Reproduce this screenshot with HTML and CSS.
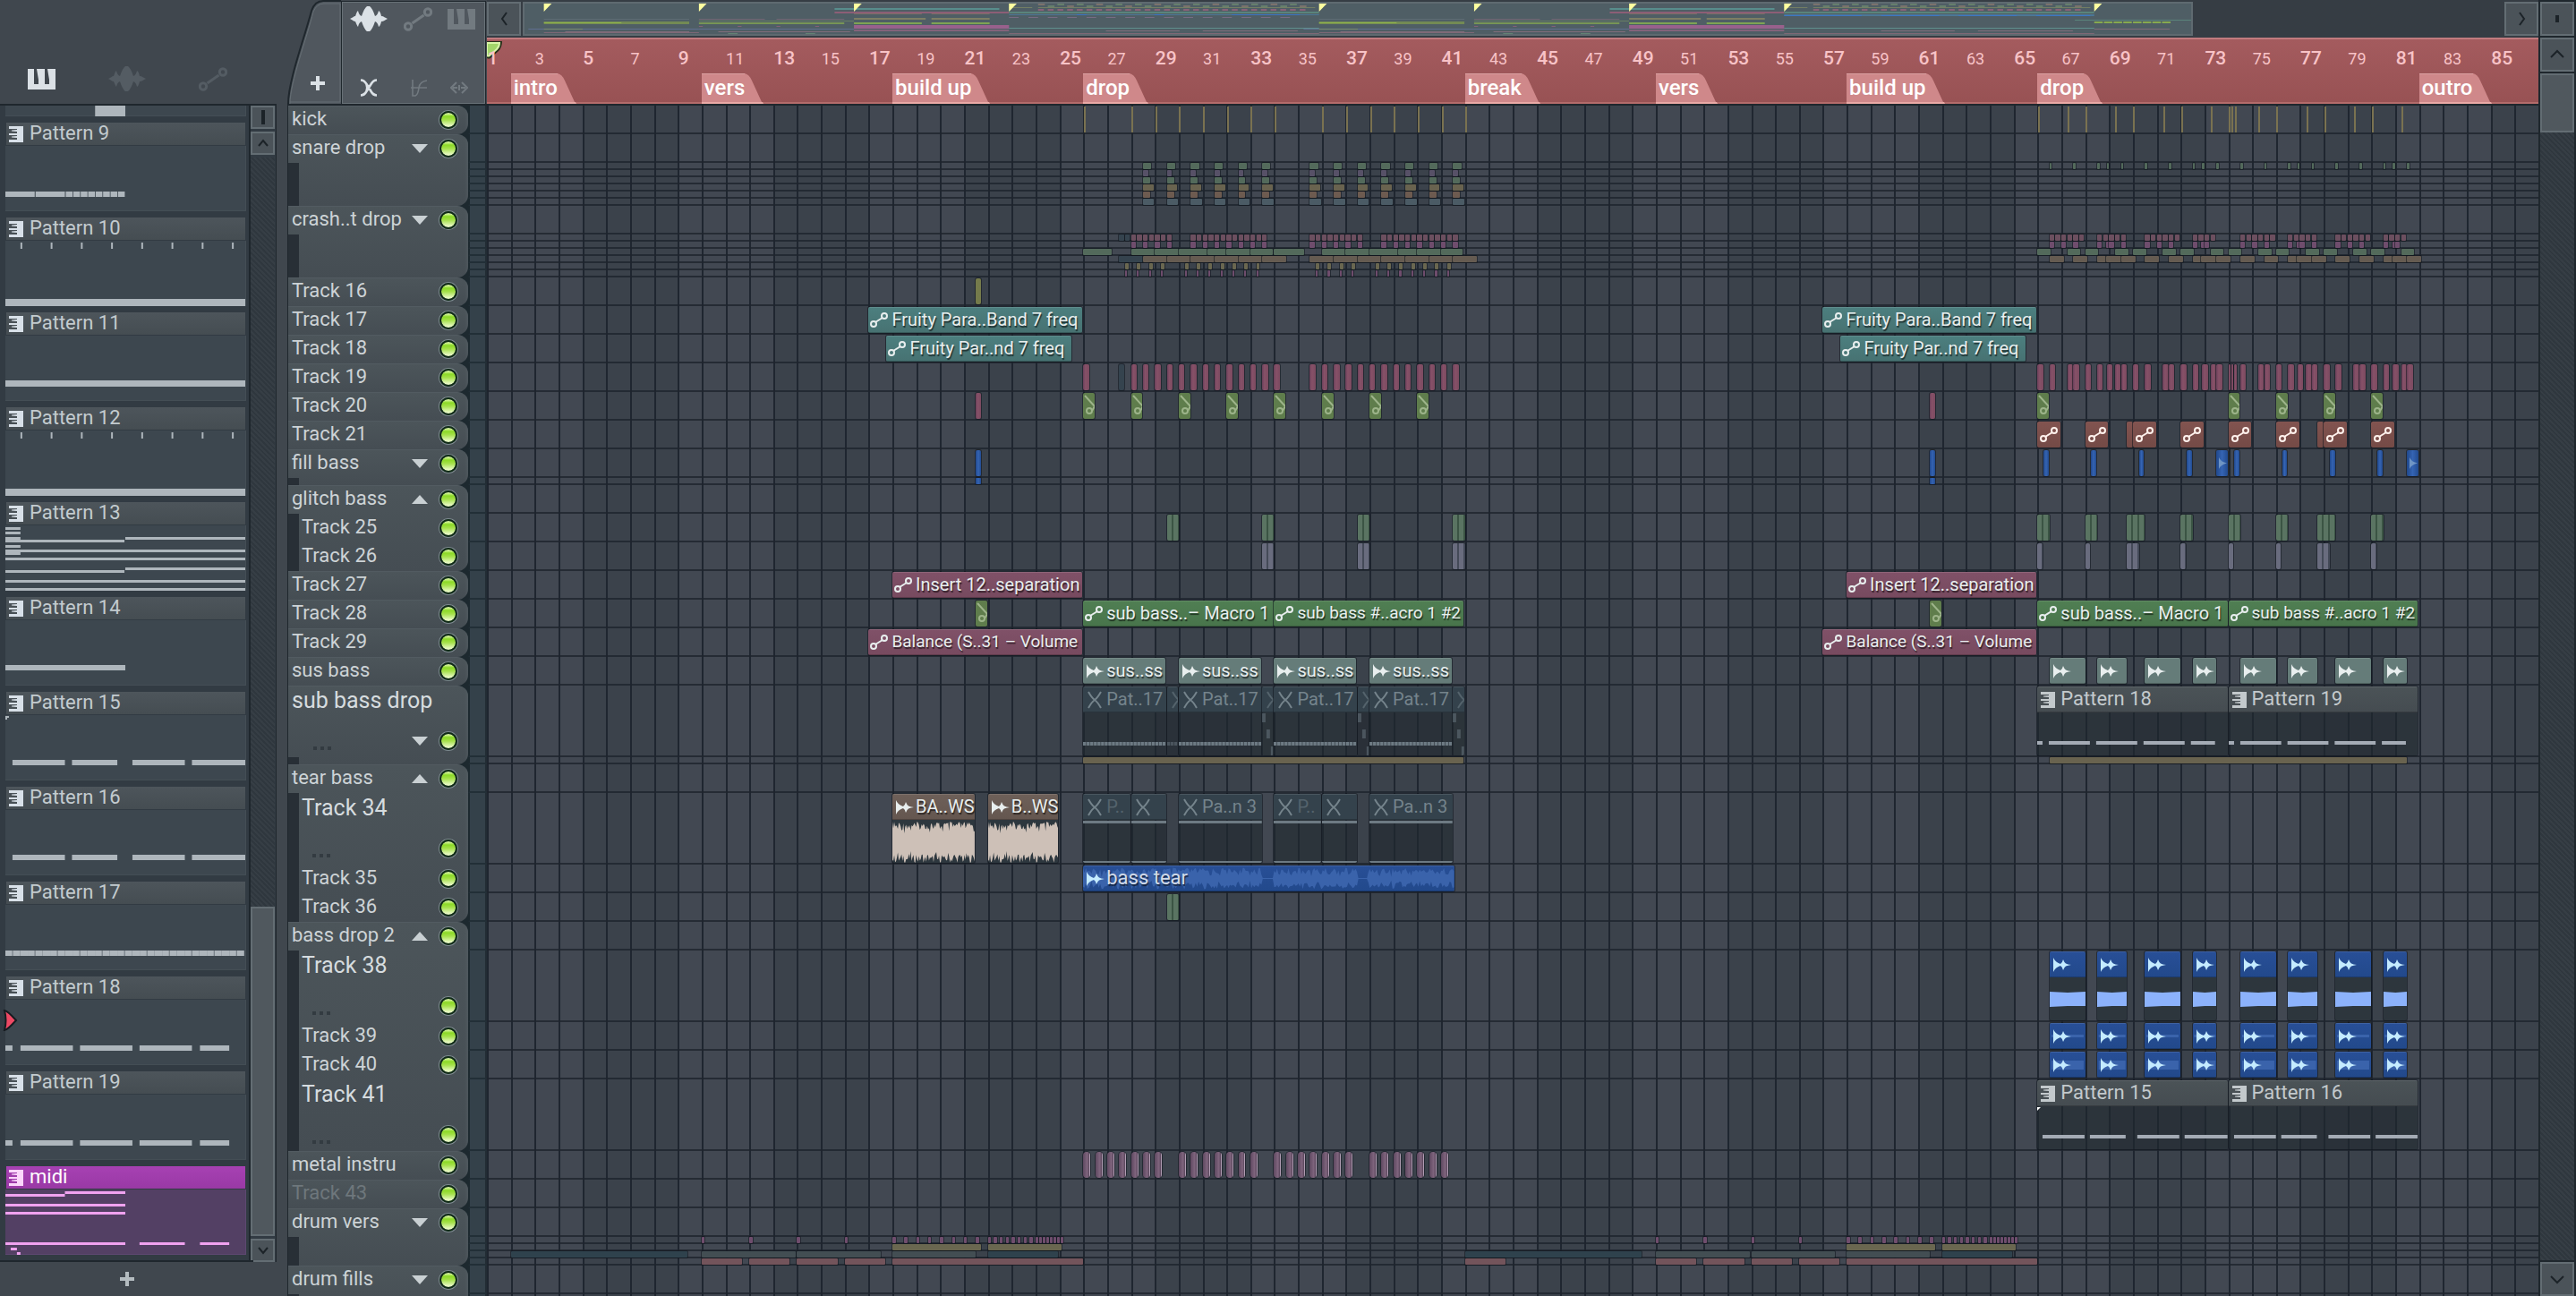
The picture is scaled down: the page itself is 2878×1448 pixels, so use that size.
FILE: index.html
```html
<!DOCTYPE html>
<html lang="en">
<head>
<meta charset="utf-8">
<title>Playlist</title>
<link rel="stylesheet" href="styles.css">
</head>
<body>
<svg class="defs" aria-hidden="true">
  <symbol id="i-piano" viewBox="0 0 31 23"><path fill-rule="evenodd" d="M0 0H31V23H0ZM7 0V17H12V12L10 0ZM19 0V17H24V12L22 0Z"/></symbol>
  <symbol id="i-wave" viewBox="0 0 42 28"><path d="M0 14C3 13 4 11 6 11Q8 5 9 5Q10 10 13 11Q16 2 19 0H22Q25 2 28 11Q31 10 32 5Q34 6 35 11C38 11 39 13 42 14C39 15 38 17 35 17Q34 22 32 23Q31 18 28 17Q25 26 22 28H19Q16 26 13 17Q10 18 9 23Q8 22 6 17C4 17 3 15 0 14Z"/></symbol>
  <symbol id="i-link" viewBox="0 0 32 27"><g fill="none" stroke="currentColor" stroke-width="3"><circle cx="5" cy="21.500" r="3.700"/><circle cx="27" cy="5.500" r="3.700"/><path d="M9.500 18L22.500 9"/></g></symbol>
  <symbol id="i-node" viewBox="0 0 20 17"><g fill="none" stroke="currentColor" stroke-width="2"><circle cx="4" cy="13" r="3"/><circle cx="16" cy="4" r="3"/><path d="M6 11L14 6"/></g></symbol>
  <symbol id="i-cross" viewBox="0 0 20 20"><path fill="none" stroke="currentColor" stroke-width="2.600" d="M1 1.500Q5 1.500 7.500 6Q9 10 7.500 14Q5 18.500 1 18.500M19 1.500Q15 1.500 12.500 6L7.500 14M19 18.500Q15 18.500 12.500 14L7.500 6"/></symbol>
  <symbol id="i-slope" viewBox="0 0 20 20"><path fill="none" stroke="currentColor" stroke-width="1.600" d="M1 10H19M3 1V19H6Q9 18 10 10Q11 3 19 2"/></symbol>
  <symbol id="i-stretch" viewBox="0 0 20 14"><path fill="none" stroke="currentColor" stroke-width="2" d="M7 1L1 7L7 13M13 1L19 7L13 13M3 7H8M12 7H17M10 4V10"/></symbol>
  <symbol id="i-keys" viewBox="0 0 16 18"><path d="M0 0H16V18H0V15H9V13L3 12.500V11.500L9 11V10H0V8H9V6L3 5.500V4.500L9 4V3H0Z"/></symbol>
  <symbol id="i-audio" viewBox="0 0 20 16"><path d="M0 0Q2 5 8 7Q10 6 11 2Q12.500 6 14 6.500Q16 7.500 20 8Q16 8.500 14 9.500Q12.500 10 11 14Q10 10 8 9Q2 11 0 16Z"/></symbol>
  <symbol id="i-mute" viewBox="0 0 18 20"><path fill="none" stroke="currentColor" stroke-width="2" d="M2 1Q6 8 9 10Q12 8 16 1M2 19Q6 12 9 10Q12 12 16 19"/></symbol>
</svg>

<div class="app">
  <aside class="browser" aria-label="Picker">
    <nav class="browser-tabs">
      <button class="icon-btn on" aria-label="Patterns"><svg width="31" height="23"><use href="#i-piano"/></svg></button>
      <button class="icon-btn faint" aria-label="Audio clips"><svg width="42" height="28"><use href="#i-wave"/></svg></button>
      <button class="icon-btn faint" aria-label="Automation clips"><svg width="32" height="27"><use href="#i-link"/></svg></button>
    </nav>
    <div class="browser-body">
      <div class="patterns" id="patterns"></div>
      <div class="scroll scroll-left">
        <button class="sbtn" aria-label="Scroll options"><svg width="20" height="20"><path d="M10 2V18" stroke-width="4"/></svg></button>
        <button class="sbtn" aria-label="Scroll up"><svg width="20" height="20"><path d="M5 13L10 7L15 13"/></svg></button>
        <div class="strack"><div class="sthumb thumb-left"></div></div>
        <button class="sbtn" aria-label="Scroll down"><svg width="20" height="20"><path d="M5 7L10 13L15 7"/></svg></button>
      </div>
    </div>
    <div class="browser-foot"><button class="icon-btn soft" aria-label="Add pattern"><svg width="18" height="18"><path d="M7 1H11V7H17V11H11V17H7V11H1V7H7Z"/></svg></button></div>
  </aside>

  <main class="playlist">
    <section class="pl-main">
      <header class="pl-head">
        <div class="corner">
          <div class="add-tab">
            <svg class="tab-shape" viewBox="0 0 60 116" aria-hidden="true"><path class="tab-fill" d="M1 116C1 90 20 40 28 12Q32 2 40 2H60V116Z"/><path class="tab-dark" d="M1 116C1 90 20 40 27 12Q31 1 40 1H60"/><path class="tab-light" d="M3 116C3 92 22 42 29 13Q33 4 41 4H59V114H3"/></svg>
            <button class="icon-btn on" aria-label="Add track"><svg width="18" height="18"><path d="M7 1H11V7H17V11H11V17H7V11H1V7H7Z"/></svg></button>
          </div>
          <div class="tools">
            <div class="tool-row">
              <button class="icon-btn on" aria-label="Audio"><svg width="42" height="28"><use href="#i-wave"/></svg></button>
              <button class="icon-btn dim" aria-label="Automation"><svg width="32" height="27"><use href="#i-link"/></svg></button>
              <button class="icon-btn dim" aria-label="Piano roll"><svg width="31" height="23"><use href="#i-piano"/></svg></button>
            </div>
            <div class="tool-row">
              <button class="icon-btn on wide" aria-label="Crossfade"><svg width="20" height="20"><use href="#i-cross"/></svg></button>
              <button class="icon-btn dim" aria-label="Slope"><svg width="20" height="20"><use href="#i-slope"/></svg></button>
              <button class="icon-btn dim" aria-label="Stretch"><svg width="20" height="14"><use href="#i-stretch"/></svg></button>
            </div>
          </div>
        </div>
        <div class="time">
          <div class="overview">
            <button class="sbtn" aria-label="Scroll left"><svg width="20" height="20"><path d="M13 3L8 10L13 17"/></svg></button>
            <div class="minimap"><svg id="minimap" viewBox="0 0 86 34" preserveAspectRatio="none"></svg></div>
            <button class="sbtn" aria-label="Scroll right"><svg width="20" height="20"><path d="M8 3L13 10L8 17"/></svg></button>
          </div>
          <div class="ruler" id="ruler">
            <svg class="playhead" width="18" height="22" aria-hidden="true"><path d="M0 1H17Q17 8 13 12L4 20Q2 21 0 20Z" class="ph-edge"/><path d="M0 3H14Q14 7 11 10L3 17Q1 18 0 17Z" class="ph-fill"/></svg>
          </div>
        </div>
      </header>
      <div class="tracks">
        <div class="heads" id="heads"></div>
        <div class="arrange">
          <div class="grid" id="grid"></div>
          <div class="lanes" id="lanes"></div>
        </div>
      </div>
    </section>
    <div class="scroll scroll-right">
      <button class="sbtn" aria-label="View options"><svg width="20" height="20"><path d="M10 6V14" stroke-width="4"/></svg></button>
      <button class="sbtn" aria-label="Scroll up"><svg width="20" height="20"><path d="M3 13L10 6L17 13"/></svg></button>
      <div class="strack"><div class="sthumb thumb-right"></div></div>
      <button class="sbtn" aria-label="Scroll down"><svg width="20" height="20"><path d="M3 7L10 14L17 7"/></svg></button>
    </div>
  </main>
</div>
<script src="playlist.js"></script>
</body>
</html>
```
FILE: styles.css
```css
* { box-sizing: border-box; }
:root {
  --text: #cdd3d6;
  --panel: #40474e;
  --edge: #1f272d;
  --bevel: #636d73;
  --names: Roboto, "Liberation Sans", sans-serif;
}
body { margin: 0; background: var(--panel); color: var(--text); font-family: var(--names); font-size: 22px; }
button { border: 0; background: none; padding: 0; margin: 0; color: inherit; font: inherit; display: flex; align-items: center; justify-content: center; }
svg { display: block; }
.defs { position: absolute; width: 0; height: 0; }
.app { display: flex; height: 100vh; overflow: hidden; }

.icon-btn svg { fill: currentColor; }
.icon-btn.on { color: #dbe1e6; }
.icon-btn.soft { color: #b4bcc0; }
.icon-btn.dim { color: #727a80; }
.icon-btn.faint { color: #545c63; }

/* pattern picker */
.browser { flex: none; width: 309px; margin-right: 12px; display: flex; flex-direction: column; }
.browser-tabs { flex: none; height: 118px; padding: 56px 55px 0 31px; display: flex; justify-content: space-between; align-items: flex-start; border-bottom: 2px solid var(--edge); }
.browser-tabs .icon-btn { height: 64px; }
.browser-body { flex: 1; min-height: 0; display: flex; background: #323b43; border-right: 1px solid var(--edge); }
.patterns { flex: 1; min-width: 0; padding: 0 3px 0 6px; overflow: hidden; }
.browser-foot { flex: none; height: 38px; width: 283px; display: flex; align-items: center; justify-content: center; }
.browser-body + .browser-foot { box-shadow: 0 -2px 0 var(--edge); }
.pattern { position: relative; margin-bottom: 7px; color: #c3cbcf; }
.pattern-head { display: flex; align-items: center; gap: 7px; height: 25px; margin: 0 1px 1px; padding-left: 3px; background: linear-gradient(#4d555b, #454d52); }
.pattern-head span { line-height: 22px; padding-bottom: 2px; }
.pattern-head svg { fill: #d8e0e8; }
.pattern-body { height: 73px; background: #3d474f; border: 1px solid #444e55; border-width: 0 1px 1px 0; }
.pattern-body svg { width: 100%; height: 73px; fill: #aeb6bc; }
.pattern.partial .pattern-body, .pattern.partial svg { height: 12px; }
.pattern.active { color: #fff; }
.pattern.active .pattern-head { background: linear-gradient(#a741b3, #9939a5); }
.pattern.active .pattern-head svg { fill: #fbd6fb; }
.pattern.active .pattern-body { background: #534064; border-color: #5d4870; }
.pattern.active .pattern-body svg { fill: #f0a2f0; }
.cursor { position: absolute; left: -3px; top: 36px; fill: #ee4964; stroke: #161b20; stroke-width: 2; }

/* scroll bars */
.scroll { display: flex; flex-direction: column; flex: none; }
.scroll-left { width: 30px; padding-right: 1px; border-left: 2px solid var(--edge); gap: 3px; }
.scroll-right { width: 42px; padding: 2px 2px 0 2px; gap: 2px; background: var(--edge); }
.sbtn { flex: none; background: #4b5359; border: 2px solid var(--bevel); }
.sbtn svg { fill: none; stroke: #1c2328; stroke-width: 2; }
.scroll-left .sbtn { height: 26px; }
.scroll-right .sbtn { height: 38px; }
.strack { flex: 1; display: flex; flex-direction: column; background: repeating-linear-gradient(45deg, #2f373e 0 2px, #363e45 2px 4px); }
.sthumb { background: #50585e; border: 2px solid var(--bevel); }
.thumb-left { margin-top: auto; height: 368px; }
.thumb-right { height: 66px; }

/* playlist header */
.playlist { flex: 1; min-width: 0; display: flex; }
.pl-main { flex: 1; min-width: 0; display: flex; flex-direction: column; }
.pl-head { flex: none; display: flex; height: 118px; border-bottom: 2px solid var(--edge); }
.corner { flex: none; width: 223px; display: flex; }
.add-tab { position: relative; width: 60px; display: flex; align-items: flex-end; justify-content: center; padding: 0 0 14px 8px; }
.tab-shape { position: absolute; inset: 0; width: 60px; height: 116px; fill: none; }
.add-tab .icon-btn { position: relative; }
.tab-fill { fill: #50575e; }
.tab-dark { stroke: var(--edge); stroke-width: 2; }
.tab-light { stroke: #656e74; stroke-width: 1; }
.tools { flex: 1; margin: 2px 2px 0 1px; padding: 4px 10px 5px 8px; background: #50575e; border: 1px solid #687177; box-shadow: 0 0 0 1px var(--edge); display: flex; flex-direction: column; justify-content: space-between; }
.tool-row { display: flex; align-items: center; justify-content: space-between; }
.tool-row:last-child { padding: 0 8px 2px 0; }
.wide { width: 42px; }
.time { flex: 1; min-width: 0; display: flex; flex-direction: column; }
.overview { flex: none; height: 42px; padding: 2px 0; display: flex; background: #363d44; }
.overview .sbtn { width: 38px; }
.minimap { flex: 0 1 1866px; margin: 0 auto 0 2px; background: #4f5e65; border: 2px solid #5f6a70; }
.minimap svg { width: 100%; height: 34px; }
.minimap rect { opacity: .75; }
.ruler { flex: 1; position: relative; background: linear-gradient(#a45b5e, #985254); border-top: 2px solid #c27b7e; border-bottom: 2px solid #b46c6b; color: #f8c3c7; }
.playhead { position: absolute; left: 0; top: 1px; }
.ph-edge { fill: #26301a; }
.ph-fill { fill: #a3d56a; stroke: #d8f5a8; stroke-width: 2; }
.num { position: absolute; top: 8px; font: 500 21px/26px var(--names); }
.num.minor { font: 400 18px/28px var(--names); }
.marker { position: absolute; bottom: -2px; height: 34px; display: flex; color: #fff; font: 500 24px/30px var(--names); }
.marker span { padding: 0 0 0 3px; background: #cf888a; border-top: 1px solid #dba0a1; border-bottom: 2px solid #eaa9a6; }
.marker svg { fill: #cf888a; }

/* track heads */
.tracks { flex: 1; min-height: 0; display: flex; overflow: hidden; }
.heads { flex: none; width: 202px; background: #1d292f; border-left: 1px solid var(--edge); }
.group { border-radius: 0 12px 12px 0; overflow: hidden; background: linear-gradient(90deg, #59636900 98%, #59636966), linear-gradient(#4c555a, #454d53); border-top: 1px solid #525b61; }
.head { display: flex; gap: 12px; align-items: center; height: 32px; padding: 0 11px 0 4px; }
.group > .head:first-child { margin-top: -1px; }
.head.child, .tail { border-left: 12px solid #282f36; }
.head.child { padding-left: 3px; }
.tname { flex: 1; min-width: 0; white-space: nowrap; line-height: 30px; align-self: flex-start; font-size: 22px; }
.head.off .tname { color: #6e777c; }
.head.tall { height: 80px; flex-wrap: wrap; align-content: space-between; padding-bottom: 8px; }
.head.tall .tname { flex: 1 0 100%; font-size: 25px; line-height: 34px; color: #d6dcdf; }
.dots { flex: 1; display: flex; gap: 4px; padding: 16px 0 0 12px; }
.tall:not(.child) .dots { padding-left: 24px; }
.dots i { width: 4px; height: 4px; background: #333b41; }
.fold { flex: none; width: 18px; height: 12px; fill: #c9d0d3; }
.led { appearance: none; flex: none; margin: 0 1px; width: 20px; height: 20px; border-radius: 50%; border: 2px solid #102c16; box-shadow: 0 0 0 1px #7d898f; background: linear-gradient(#d6f59a 6%, #8bd926 25%, #a5e14c 50%, #e6f9c0 90%); background-clip: padding-box; }
.tail { height: 8px; }

/* arrangement */
.arrange { flex: 1; min-width: 0; position: relative; background: #1d292f; }
.grid { position: absolute; inset: 0 0 0 21px; display: grid; grid-template-columns: repeat(86, 1fr); }
.grid i { background: #3b424b; border-left: 2px solid #1f2630; }
.grid i:nth-child(8n+1), .grid i:nth-child(8n+2), .grid i:nth-child(8n+3), .grid i:nth-child(8n+4) { background: #424852; }
.lanes { position: relative; }
.row { display: flex; height: 32px; }
.row.tall { height: 80px; }
.row.mini { height: 8px; }
.gutter { flex: none; width: 21px; border-left: 2px solid #1d292f; border-right: 2px solid #222c34; border-bottom: 2px solid #222f37; background: #34414a; }
.lane { flex: 1; position: relative; border-bottom: 2px solid #1e242dcc; }
.clip { position: absolute; top: 1px; bottom: 0; min-width: 2px; overflow: hidden; border-radius: 2px; box-shadow: 0 0 0 1px #0e131a88; }
.mini .clip { top: 0; bottom: -1px; border-radius: 1px; }
.bar { display: flex; align-items: center; gap: 4px; height: 29px; padding: 0 0 0 2px; white-space: nowrap; font: 20px/26px var(--names); color: #e8eeee; text-shadow: 1px 2px 1px #0009; box-shadow: inset 0 1px #ffffff1c, inset 0 -1px #0003; }
.bar span { padding-bottom: 2px; }
.bar svg { flex: none; fill: currentColor; }
.tight .bar { font-size: 19px; }
.teal { background: linear-gradient(#4c7f7f, #477272); }
.rose { background: linear-gradient(#805168, #774a5f); }
.leaf { background: linear-gradient(#507f53, #48744b); }
.sage { background: #657c79; }
.blue { background: linear-gradient(#284f97, #22498b); }
.sage .bar, .blue .bar, .brown .bar, .pat .bar, .ghost .bar { padding-left: 4px; }
.sage .bar, .blue .bar { gap: 2px; }
.blue .bar { color: #c4ebff; }
.blue .bar span { color: #d3dbe8; font-size: 22px; }
.brown .bar { background: linear-gradient(#6e6059, #64564f); gap: 2px; }
.ghost .bar { background: #34424c; color: #75848c; text-shadow: none; }
.ghost.faded span, .ghost.sliver svg { opacity: .5; }
.pat .bar { background: linear-gradient(#4b5357, #454c51); color: #c3c9cc; text-shadow: none; font-size: 22px; gap: 6px; }
.tall .clip { background: #20282fa0; }
.tall .clip.brown { background: #2d373e; }
.body { width: 100%; height: 49px; }
.pat .body { fill: #a4abb5; }
.ghost .body { fill: #6d7a83; }
.brown .body { fill: #cdc0b7; }
.tall .blue .bar { background: linear-gradient(#284f97, #22498b); }
.tall .clip.blue { background: #2d363d; }
.tall .blue .body { fill: #8cb2fb; }
.under { position: absolute; inset: 0; width: 100%; height: 100%; fill: #3a63ab; }
.over { position: relative; }
.clip.c-kick { background: #7a7250; box-shadow: none; border-radius: 0; }
.c-green { background: #536a5b; }
.c-violet { background: #575167; }
.c-sand { background: #69634f; }
.c-clay { background: #6d5b50; }
.c-slate { background: #4b5b65; }
.c-mauve { background: #6c4f5f; }
.c-plum { background: #6f4d6d; }
.c-earth { background: #655b51; }
.c-olive { background: #757b4b; }
.c-moss { background: #6a6750; }
.c-pink { background: linear-gradient(90deg, #6a405a, #875168 40%, #7b4a60); }
.c-lime { background: #5f7d4c; }
.c-lime svg { fill: none; stroke: #9db48a; stroke-width: 2; }
.c-rust { background: linear-gradient(#825450, #744a46); color: #fff1ec; }
.c-rust svg { margin: 6px 0 0 3px; }
.c-blue { background: linear-gradient(90deg, #20488c, #3564b3 50%, #224b90); }
.c-bars { background: repeating-linear-gradient(90deg, #5a7462 0 5px, #3b5444 5px 7px); }
.c-lilac { background: repeating-linear-gradient(90deg, #696c7e 0 5px, #444a58 5px 7px); }
.clip.c-metal { background: linear-gradient(90deg, #5e4860, #80657e 60%, #5f4b61 82%, #b09cb2 84%); border-radius: 4px; }
.c-deep { background: #2f424d; }
.c-grey { background: #434e53; }
.c-red { background: #73545b; }
.c-shade { background: #35434e; }
```
FILE: playlist.js
```js
const BARS = 86;
const pct = n => (n / BARS * 100).toFixed(4) + '%';
const icon = (id, w, h) => `<svg width="${w}" height="${h}" aria-hidden="true"><use href="#i-${id}"/></svg>`;
const rects = list => list.map(([x, y, w, h]) => `<rect x="${x}" y="${y}" width="${w}" height="${h}"/>`).join('');
const steps = (from, to, by) => { const out = []; for (let b = from; b <= to + 0.001; b += by) out.push(b); return out; };

/* pattern picker: notes are [x, y, width, height] on a 270 x 73 field */
const ticks = steps(17, 255, 34).map(x => [x, 2, 2, 7]);
const phraseA = [[8, 50, 59, 6], [75, 50, 51, 6], [143, 50, 59, 6], [210, 50, 60, 6]];
const phraseB = [[0, 51, 8, 6], [17, 51, 59, 6], [84, 51, 59, 6], [151, 51, 59, 6], [219, 51, 33, 6]];
const PATTERNS = [
  ['', [[101, 0, 34, 12]], 'partial'],
  ['Pattern 9', [[0, 51, 33, 6], [34, 51, 33, 6], ...steps(68, 127, 8.4).map(x => [x, 51, 7.6, 6])]],
  ['Pattern 10', [...ticks, [0, 65, 270, 8]]],
  ['Pattern 11', [[0, 50, 270, 7]]],
  ['Pattern 12', [...ticks, [0, 65, 270, 8]]],
  ['Pattern 13', [[0, 2, 17, 3], [0, 7, 17, 3], [0, 13, 17, 5], [0, 16, 134, 3], [135, 13, 135, 3], [0, 22, 17, 3], [0, 27, 270, 3], [0, 29, 17, 4], [0, 36, 270, 3], [0, 50, 134, 3], [135, 47, 135, 3], [0, 61, 270, 3], [0, 70, 270, 3]]],
  ['Pattern 14', [[0, 50, 135, 6]]],
  ['Pattern 15', [...phraseA, [0, 1, 4, 2], [0, 3, 2, 2]]],
  ['Pattern 16', phraseA],
  ['Pattern 17', steps(0, 262, 8.4).map((x, i) => [x, 51, i % 3 ? 8.4 : 7.8, 6])],
  ['Pattern 18', phraseB, 'playing'],
  ['Pattern 19', phraseB],
  ['midi', [[0, 5, 67, 3], [67, 2, 68, 3], [0, 16, 135, 3], [0, 25, 135, 3], [0, 59, 135, 3], [151, 59, 51, 3], [219, 59, 33, 3], [6, 65, 7, 3], [13, 70, 4, 3]], 'active'],
];
document.getElementById('patterns').innerHTML = PATTERNS.map(([name, notes, state = '']) => `
  <div class="pattern ${state}">
    ${name ? `<div class="pattern-head">${icon('keys', 16, 18)}<span>${name}</span></div>` : ''}
    <div class="pattern-body"><svg viewBox="0 0 270 ${name ? 73 : 12}" preserveAspectRatio="none">${rects(notes)}</svg></div>
    ${state === 'playing' ? '<svg class="cursor" width="17" height="26"><path d="M2 2Q5 2 15 13Q5 24 2 24Q5 13 2 2Z"/></svg>' : ''}
  </div>`).join('');

/* ruler */
const MARKERS = [[1, 'intro'], [9, 'vers'], [17, 'build up'], [25, 'drop'], [41, 'break'], [49, 'vers'], [57, 'build up'], [65, 'drop'], [81, 'outro']];
const ruler = document.getElementById('ruler');
ruler.insertAdjacentHTML('beforeend',
  steps(1, 85, 2).map(n => `<span class="num ${n % 4 === 1 ? '' : 'minor'}" style="left:${pct(n - 0.98)}">${n}</span>`).join('') +
  MARKERS.map(([b, t]) => `<div class="marker" style="left:${pct(b)}"><span>${t}</span><svg width="21" height="34"><path d="M0 0Q5 1 8 8L19 32H0Z"/><path fill="#eaa9a6" d="M0 32H20L21 34H0Z"/></svg></div>`).join(''));

/* minimap, one unit per bar */
const mini = (y, color, spans, h = 1) => spans.map(([a, b]) => `<rect x="${a}" y="${y}" width="${b - a}" height="${h}" fill="${color}"/>`).join('');
const verse = o => mini(17, '#7e6a78', [[o, o + 3.4], [o + 4, o + 7.5]]) + mini(19, '#6f8a63', [[o, o + 8]]) + mini(21, '#84a850', [[o, o + 7.5]], 2)
  + mini(25, '#94627f', [[o, o + .2], [o + 2, o + 2.2], [o + 4, o + 4.2], [o + 6, o + 6.2]]) + mini(28, '#6674a0', [[o, o + 8]]) + mini(31, '#8f7381', [[o + 1, o + 7.8]]) + mini(33, '#6a9079', [[o + 1.5, o + 2], [o + 5.5, o + 6]], 2);
const intro = o => mini(17, '#637079', [[o, o + 7.5]]) + mini(20, '#7f9a4f', [[o, o + 7.5]], 3) + mini(21, '#98c248', [[o, o + 4]]) + mini(28, '#6674a0', [[o - .8, o + 8]])
  + mini(28, '#84966a', [[o, o + 2]]) + mini(31, '#8f7381', [[o + 1.1, o + 7.5]]) + mini(32, '#8d6c7c', [[o, o + 8]]);
const build = o => mini(5, '#5b9d99', [[o - 1, o + 7.5]], 2) + mini(9, '#a05f7c', [[o - 1, o + 8]], 2) + mini(11, '#8b7668', [[o, o + 3.5], [o + 4, o + 7]])
  + mini(16, '#8d8963', [[o, o + 3.7], [o + 4, o + 7]], 2) + mini(21, '#8dbc4e', [[o, o + 3.5], [o + 4, o + 7]], 2) + mini(24, '#b0639a', [[o, o + 8]], 4) + mini(29, '#946581', [[o, o + 8]], 2);
const drop = (o, dense) => mini(9, '#5e9183', [[o, o + 16]], 2) + mini(12, '#4b80a5', [[o, o + 16]], dense ? 2 : 1)
  + mini(dense ? 13 : 12, '#3775d3', dense ? [[o, o + 4], [o + 5, o + 8], [o + 9, o + 12], [o + 13, o + 15.8]] : [[o + 3.5, o + 4], [o + 7.5, o + 8], [o + 11.5, o + 15]])
  + steps(o + 1.5, o + 15, .5).map((b, i) => mini(i % 2 * 2, i % 3 ? '#6e8b70' : '#8a7a70', [[b, b + .35]], 2) + mini(6, '#9c6480', [[b, b + .3]], 2)).join('')
  + mini(4, '#7f8a64', [[o, o + 1.2], [o + 1.5, o + 15.8]]) + (dense ? '' : mini(15, '#84708e', steps(o, o + 14, 1).map(b => [b, b + .5])))
  + mini(27, '#66a29c', [[o, o + 16]]) + mini(30, '#8f7381', [[o + 5, o + 8.8], [o + 10, o + 14.9]]) + mini(33, '#8d6c7c', [[o, o + 16]]);
document.getElementById('minimap').innerHTML = intro(1) + verse(9) + build(17) + drop(25) + intro(41) + verse(49) + build(57) + drop(65, true)
  + mini(18, '#5e9183', [[80, 86]]) + mini(20, '#98c248', steps(81, 84.5, .5).map(b => [b, b + .44]), 2) + mini(28, '#8f7381', [[81, 84.9]])
  + [1, 9, 17, 25, 41, 49, 57, 65, 81].map(b => `<path fill="#ffffa0" d="M${b} 0H${b + .4}L${b} 9Z"/>`).join('');

document.getElementById('grid').innerHTML = '<i></i>'.repeat(BARS);

/* clips: [start bar, length, content] */
const box = (cls, list, len, inner = '') => list.map(b => `<div class="clip ${cls}" style="left:${pct(b)};width:${pct(len)}">${inner}</div>`).join('');
const spans = (cls, list) => list.map(([a, b]) => box(cls, [a], b - a)).join('');
const link = icon('node', 20, 17), audio = icon('audio', 20, 16), keys = icon('keys', 16, 18), mute = icon('mute', 18, 20);
const named = (cls, b, len, ic, label, body = '') => box(cls, [b], len, `<div class="bar">${ic}${label ? `<span>${label}</span>` : ''}</div>${body}`);
const both = list => [...list, ...list.map(b => b + 8)];
const bothSpans = list => [...list, ...list.map(([a, b]) => [a + 8, b + 8])];

const noise = i => { const v = Math.sin(i * 12.9898) * 43758.5453; return v - Math.floor(v); };
function wave(n, mid, amp, depth, gaps = []) {
  const top = [], low = [];
  for (let i = 0; i <= n; i++) {
    const x = i / n * 100;
    const quiet = gaps.some(([a, b]) => x > a && x < b);
    const a = quiet ? .5 : amp - depth * noise(i) * (.5 + (i % 7) / 14);
    const c = quiet ? .5 : amp - depth * noise(i + 99) * (.5 + (i % 7) / 14);
    top.push(`${x.toFixed(2)} ${(mid - a).toFixed(1)}`);
    low.unshift(`${x.toFixed(2)} ${(mid + c).toFixed(1)}`);
  }
  return `M${top.join('L')}L${low.join('L')}Z`;
}
const bodySvg = (w, inner) => `<svg class="body" viewBox="0 0 ${w} 49" preserveAspectRatio="none">${inner}</svg>`;
const AUDIO = [[65.5, 1.5], [67.5, 1.25], [69.5, 1.5], [71.5, 1], [73.5, 1.5], [75.5, 1.25], [77.5, 1.5], [79.5, 1]];
const line18 = [[0, 32, 6, 4], [13, 32, 46, 4], [66, 32, 46, 4], [119, 32, 46, 4], [172, 32, 27, 4]];
const line15 = [[6, 32, 47, 4], [59, 32, 40, 4], [112, 32, 47, 4], [165, 32, 48, 4]];
const roll = w => bodySvg(w, rects(steps(0, w - 3, 4).map(x => [x, 33, 3.4, 4])));
const chop = bodySvg(13, rects([[0, 1, 4, 10], [5, 19, 4, 10], [10, 38, 3, 11]]));
const pulse = bodySvg(100, rects([[0, 1, 100, 3], [0, 46, 100, 3]]));
const hook = `<svg width="14" height="29"><path d="M2 3L13 15L10 20"/><circle cx="7" cy="20" r="3"/></svg>`;
const strip = (y, h) => `<svg class="under" viewBox="0 0 100 29" preserveAspectRatio="none"><rect x="5" y="${y}" width="90" height="${h}"/></svg><div class="bar over">${audio}</div>`;

const pinkDrop2 = [0, .5, 1.25, 1.5, 2, 2.5, 2.9, 3.25, 3.5, 4, 4.5, 5.25, 5.5, 6, 6.5, 6.9, 7.25, 7.5, 8.5, 9.25, 9.5, 10, 10.5, 10.9, 11.25, 11.5, 12, 12.5, 13.25, 13.5, 14, 14.5, 14.9, 15.25, 15.5].map(b => b + 65);
const hits = [...steps(27.5, 32.5, 1), ...steps(34.5, 40.5, 1)];
const hats = [...steps(26.75, 28.25, .5), ...steps(29.25, 32.25, .5), ...steps(34.75, 36.25, .5), ...steps(37.25, 40.25, .5)];
const drumTop = [9, 11, 13, 15, ...steps(17, 20.5, .5), ...steps(21, 22.75, .25), ...steps(23, 24.1, .15)];

const ROWS = [
  { lane: box('c-kick', [25, 27, 28, 29, 30, 31, 32, 33, 35, 36, 37, 38, 39, 40, 41, 65, 66.25, 67, 68.25, 69, 70.25, 71, 72.25, 73, 73.12, 73.25, 74.25, 75, 76.25, 77, 78.25, 79, 80.25].map(b => b + .02), .07) },
  { lane: '' },
  { mini: box('c-green', hits, .35) + box('c-green', both([65.5, 66.5, 67.5, 67.9, 68.5, 69.5, 70.5, 71.5, 71.9, 72.5]), .1) },
  { mini: box('c-violet', hits, .22) },
  { mini: box('c-green', hits, .3) },
  { mini: box('c-sand', hits, .44) },
  { mini: box('c-clay', hits, .3) },
  { mini: box('c-slate', hits, .47) },
  { lane: '' },
  { mini: box('c-shade', [26.5, 26.75], .2) + box('c-mauve', [...steps(27, 28.5, .25), ...steps(29.5, 32.5, .25), ...steps(34.5, 36.5, .25), ...steps(37.5, 40.5, .25), ...both([...steps(65.5, 66.75, .25), ...steps(67.5, 68.5, .25), ...steps(69.5, 70.75, .25), ...steps(71.5, 72.25, .25)])], .2) },
  { mini: box('c-plum', [...steps(27, 28.5, .5), ...steps(29.5, 32.5, .5), ...steps(34.5, 36.5, .5), ...steps(37.5, 40.5, .5), ...both([65.5, 66, 66.5, 67.5, 67.87, 68, 68.5, 69.5, 70, 70.5, 71.5, 71.87, 72])], .2) },
  { mini: spans('c-green', [[25, 26.2], [27, 28], [28, 29], [29, 30.2], [30.2, 31], [31, 32], [32, 32.95], [33, 34.25], [35, 36], [36, 37], [37, 38.2], [38.2, 39], [39, 40], [40, 40.9], ...bothSpans([65, 66.25, 67, 68.25, 69, 70.25, 71, 72.25].map(b => [b, b + .55]))]) },
  { mini: spans('c-shade', [[26.5, 27.5]]) + box('c-earth', [...steps(27.5, 32.5, 1), ...steps(34.5, 40.5, 1)], 1) + spans('c-earth', bothSpans([[65.5, 66.1], [66.5, 67.1], [67.5, 67.87], [67.87, 68.5], [68.5, 69.1], [69.5, 70.1], [70.5, 71.1], [71.5, 71.87], [71.87, 72.5], [72.5, 73.1]])) },
  { mini: box('c-moss', hats, .15) },
  { mini: box('c-plum', hats, .08) },
  { lane: box('c-olive', [20.5], .22) },
  { lane: [0, 40].map(o => named('teal', 16 + o, 8.95, link, 'Fruity Para..Band 7 freq')).join('') },
  { lane: [0, 40].map(o => named('teal', 16.75 + o, 7.75, link, 'Fruity Par..nd 7 freq')).join('') },
  { lane: box('c-shade', [26.5], .2) + box('c-pink', [25, ...steps(27, 33, .5), ...steps(34.5, 40.5, .5), ...pinkDrop2], .24) + box('c-pink', [73, 73.12, 73.24], .1) },
  { lane: box('c-pink', [20.5, 60.5], .22) + box('c-lime', [...steps(25, 39, 2), 65, 73, 75, 77, 79], .48, hook) },
  { lane: box('c-rust', [68.75, 76.75], .25) + box('c-rust', [65, 67, 69, 71, 73, 75, 77, 79], .97, link) },
  { lane: box('c-blue', [20.5, 60.5, ...both([65.25, 67.25, 69.25, 71.25])], .22) + box('c-blue', [72.5, 80.5], .48, '<svg width="13" height="29"><path fill="#6f95c4" d="M3 8Q5 13 12 14.500Q5 16 3 21Z"/></svg>') },
  { mini: box('c-blue', [20.5, 60.5], .22) },
  { lane: '' },
  { lane: box('c-bars', [28.5, 32.5, 36.5, 40.5, 65, 67, 71, 73, 75, 79], .5) + box('c-bars', [68.75, 76.75], .75) },
  { lane: box('c-lilac', [32.5, 36.5, 40.5, 68.75, 76.75], .5) + box('c-lilac', [65, 67, 71, 73, 75, 79], .2) },
  { lane: [17, 57].map(b => named('rose', b, 7.95, link, 'Insert 12..separation')).join('') },
  { lane: box('c-lime', [20.5, 60.5], .48, hook) + [25, 65].map(b => named('leaf', b, 7.98, link, 'sub bass..– Macro 1') + named('leaf tight', b + 8, 7.95, link, 'sub bass #..acro 1 #2')).join('') },
  { lane: [16, 56].map(b => named('rose tight', b, 8.95, link, 'Balance (S..31 – Volume')).join('') },
  { lane: [25, 29, 33, 37].map(b => named('sage', b, 3.45, audio, 'sus..ss')).join('') + AUDIO.map(([b, l]) => named('sage', b, l, audio, '')).join('') },
  { tall: [25, 29, 33, 37].map(b => named('ghost', b, 3.48, mute, 'Pat..17', roll(92)) + named('ghost sliver', b + 3.5, .48, mute, '', b > 25 ? chop : roll(13))).join('') + named('pat', 65, 7.98, keys, 'Pattern 18', bodySvg(213, rects(line18))) + named('pat', 73, 7.95, keys, 'Pattern 19', bodySvg(213, rects(line18))) },
  { mini: spans('c-sand', [[25, 40.95], [65.5, 80.5]]) },
  { lane: '' },
  { tall: named('brown', 17, 3.45, audio, 'BA..WS', bodySvg(100, `<path d="${wave(90, 25, 23, 14)}"/>`)) + named('brown', 21, 2.95, audio, 'B..WS', bodySvg(100, `<path d="${wave(76, 25, 23, 14)}"/>`))
    + [25, 33].map(b => named('ghost faded', b, 1.98, mute, 'P..', pulse) + named('ghost', b + 2, 1.48, mute, '', pulse) + named('ghost', b + 4, 3.48, mute, 'Pa..n 3', pulse)).join('') },
  { lane: box('blue', [25], 15.55, `<svg class="under" viewBox="0 0 100 29" preserveAspectRatio="none"><path d="${wave(260, 14.5, 12, 11, [[48.4, 51.2], [74.2, 76.8]])}"/></svg><div class="bar over">${audio}<span>bass tear</span></div>`) },
  { lane: box('c-bars', [28.5], .5) },
  { lane: '' },
  { tall: AUDIO.map(([b, l]) => named('blue', b, l, audio, '', bodySvg(100, '<path d="M0 16L50 17L100 16V32L50 32L0 33Z"/>'))).join('') },
  { lane: AUDIO.map(([b, l]) => box('blue', [b], l, strip(13, 3))).join('') },
  { lane: AUDIO.map(([b, l]) => box('blue', [b], l, strip(10, 10))).join('') },
  { tall: named('pat', 65, 7.98, keys, 'Pattern 15', bodySvg(213, rects(line15) + '<path fill="#fff" d="M0 1H4L0 5Z"/>')) + named('pat', 73, 7.95, keys, 'Pattern 16', bodySvg(213, rects(line15))) },
  { lane: box('c-metal', [...steps(25, 28, .5), ...steps(29, 32, .5), ...steps(33, 36, .5), ...steps(37, 40, .5)], .3) },
  { lane: '' },
  { lane: '' },
  { mini: [0, 40].map(o => box('c-plum', drumTop.map(b => b + o), .13)).join('') },
  { mini: spans('c-moss', [[17, 20.7], [21, 24.1], [57, 60.7], [61, 64.1]]) },
  { mini: spans('c-deep', [[1, 8.4], [41, 48.4]]) + [0, 40].map(o => spans('c-grey', [[9 + o, 12.95 + o], [13 + o, 16.5 + o], [17 + o, 20.5 + o]]) + spans('c-deep', [[21 + o, 23.95 + o]])).join('') },
  { mini: [0, 40].map(o => spans('c-red', [[9, 10.7], [11, 12.7], [13, 14.7], [15, 16.7], [17, 25]].map(([a, b]) => [a + o, b + o]))).join('') + spans('c-red', [[41, 42.7]]) },
  { lane: '' },
  { lane: '' },
];
document.getElementById('lanes').innerHTML = ROWS.map(r => {
  const kind = 'tall' in r ? 'tall' : 'mini' in r ? 'mini' : 'lane';
  return `<div class="row ${kind === 'lane' ? '' : kind}"><div class="gutter"></div><div class="lane">${r[kind]}</div></div>`;
}).join('');

/* track heads, one array for each group; tail is the height of its folded rows */
const t = (name, more = {}) => ({ name, ...more });
const GROUPS = [
  [t('kick')], [t('snare drop', { fold: 'down', tail: 48 })], [t('crash..t drop', { fold: 'down', tail: 48 })],
  ...[16, 17, 18, 19, 20, 21].map(n => [t('Track ' + n)]),
  [t('fill bass', { fold: 'down', tail: 8 })],
  [t('glitch bass', { fold: 'up' }), t('Track 25', { child: 1 }), t('Track 26', { child: 1 })],
  [t('Track 27')], [t('Track 28')], [t('Track 29')], [t('sus bass')],
  [t('sub bass drop', { tall: 1, fold: 'down', tail: 8 })],
  [t('tear bass', { fold: 'up' }), t('Track 34', { child: 1, tall: 1 }), t('Track 35', { child: 1 }), t('Track 36', { child: 1 })],
  [t('bass drop 2', { fold: 'up' }), t('Track 38', { child: 1, tall: 1 }), t('Track 39', { child: 1 }), t('Track 40', { child: 1 }), t('Track 41', { child: 1, tall: 1 })],
  [t('metal instru')], [t('Track 43', { off: 1 })], [t('drum vers', { fold: 'down', tail: 32 })], [t('drum fills', { fold: 'down', tail: 32 })],
];
const arrow = dir => dir ? `<svg class="fold" viewBox="0 0 18 12"><path d="${dir === 'down' ? 'M0 1H18L9 11Z' : 'M0 11H18L9 1Z'}"/></svg>` : '';
document.getElementById('heads').innerHTML = GROUPS.map(g => `<div class="group">${g.map(h => `
  <div class="head ${h.child ? 'child' : ''} ${h.tall ? 'tall' : ''} ${h.off ? 'off' : ''}">
    <span class="tname">${h.name}</span>${h.tall ? '<span class="dots"><i></i><i></i><i></i></span>' : ''}${arrow(h.fold)}
    <input class="led" type="checkbox" checked aria-label="${h.name} on">
  </div>${h.tail ? `<div class="tail" style="height:${h.tail}px"></div>` : ''}`).join('')}</div>`).join('');
```
